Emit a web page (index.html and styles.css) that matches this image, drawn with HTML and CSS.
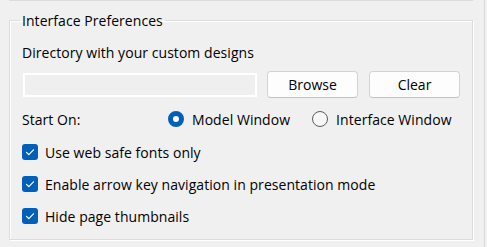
FILE: index.html
```html
<!DOCTYPE html>
<html>
<head>
<meta charset="utf-8">
<link rel="stylesheet" href="styles.css">
</head>
<body>
<div class="page">
  <div class="prev"></div>
  <fieldset class="group">
    <legend class="legend">Interface Preferences</legend>
    <div class="dir-label">Directory with your custom designs</div>
    <div class="dir-row">
      <input class="dir-input" type="text" disabled>
      <button class="btn browse">Browse</button>
      <button class="btn clear">Clear</button>
    </div>
    <div class="start-row">
      <span class="start-label">Start On:</span>
      <label class="radio checked"><span class="dot"></span>Model Window</label>
      <label class="radio"><span class="dot"></span>Interface Window</label>
    </div>
    <div class="checks">
      <label class="check"><span class="box"><svg width="16" height="16" viewBox="0 0 16 16"><polyline points="4.5,8.3 6.8,10.6 11.5,5.8" fill="none" stroke="#fff" stroke-width="1.2" stroke-linecap="round" stroke-linejoin="round"/></svg></span>Use web safe fonts only</label>
      <label class="check"><span class="box"><svg width="16" height="16" viewBox="0 0 16 16"><polyline points="4.5,8.3 6.8,10.6 11.5,5.8" fill="none" stroke="#fff" stroke-width="1.2" stroke-linecap="round" stroke-linejoin="round"/></svg></span>Enable arrow key navigation in presentation mode</label>
      <label class="check"><span class="box"><svg width="16" height="16" viewBox="0 0 16 16"><polyline points="4.5,8.3 6.8,10.6 11.5,5.8" fill="none" stroke="#fff" stroke-width="1.2" stroke-linecap="round" stroke-linejoin="round"/></svg></span>Hide page thumbnails</label>
    </div>
  </fieldset>
</div>
</body>
</html>
```

FILE: styles.css
```css
html, body {
  margin: 0;
  padding: 0;
  background: #f0f0f0;
}
body {
  font-family: "Open Sans", "Noto Sans", sans-serif;
  font-size: 14px;
  letter-spacing: 0.05px;
  color: #000;
}
.page {
  width: 485px;
  height: 247px;
  box-sizing: border-box;
  border-right: 1px solid #dadada;
  overflow: hidden;
}
.prev {
  margin-left: 9px;
  width: 464px;
  height: 1px;
  background: #dcdcdc;
}
.group {
  margin: 9px 0 0 9px;
  width: 464px;
  min-width: 0;
  box-sizing: border-box;
  border: 1px solid #dcdcdc;
  box-shadow: 1px 1px 0 #fff, inset 1px 1px 0 #fff;
  padding: 12px 12px 7px 12px;
}
.legend {
  padding: 0 2px;
  margin-left: -2px;
  line-height: 21px;
}
.dir-label {
  line-height: 20px;
}
.dir-row {
  display: flex;
  align-items: center;
  height: 27px;
  margin-top: 8px;
}
.dir-input {
  width: 234px;
  height: 24px;
  margin: 0 0 0 1px;
  box-sizing: border-box;
  border: 2px solid #fff;
  background: #efefef;
  padding: 0;
}
.btn {
  height: 27px;
  width: 91px;
  box-sizing: border-box;
  border: 1px solid #d3d3d3;
  border-bottom-color: #c2c2c2;
  border-radius: 4px;
  background: #fdfdfd;
  font: inherit;
  color: #000;
  padding: 0;
}
.browse {
  margin-left: 10px;
}
.clear {
  margin-left: 11px;
}
.start-row {
  display: flex;
  align-items: center;
  height: 24px;
  margin-top: 9px;
}
.start-label {
  width: 146px;
}
.radio {
  display: flex;
  align-items: center;
  gap: 8px;
}
.radio + .radio {
  margin-left: 22px;
}
.dot {
  width: 16px;
  height: 16px;
  box-sizing: border-box;
  border-radius: 50%;
  border: 1px solid #5c5c5c;
  background: #f6f6f6;
}
.checked .dot {
  border: 5px solid #005fb8;
  background: #fff;
}
.checks {
  margin-top: 5px;
}
.check {
  display: flex;
  align-items: center;
  height: 32px;
  gap: 7px;
}
.box {
  width: 16px;
  height: 16px;
  border-radius: 3px;
  background: #005fb8;
  display: block;
}
.box svg {
  display: block;
}
```
